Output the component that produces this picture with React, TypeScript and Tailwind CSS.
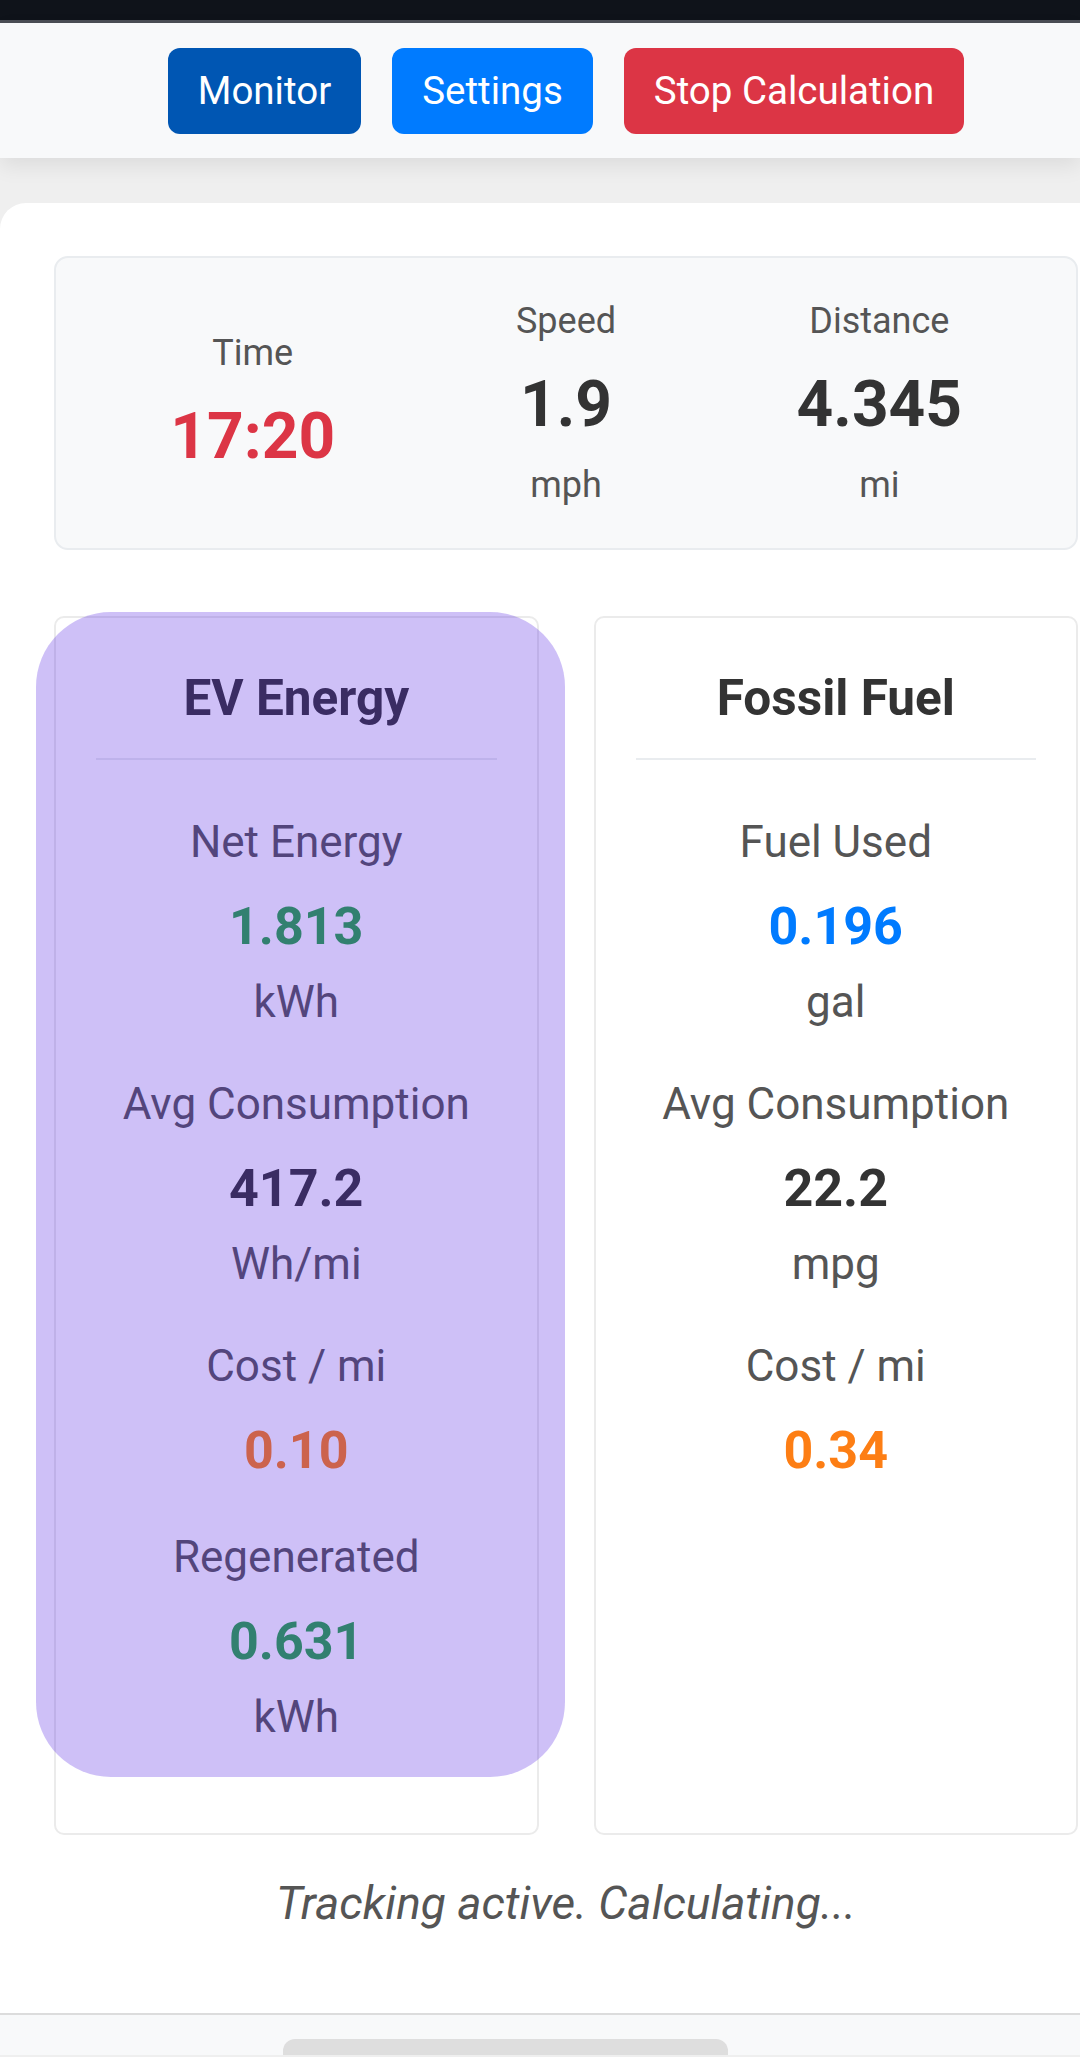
import React from 'react';

type Metric = { label: string; value: string; unit?: string; color: string };

const EV: Metric[] = [
  { label: 'Net Energy', value: '1.813', unit: 'kWh', color: 'text-[#28a745]' },
  { label: 'Avg Consumption', value: '417.2', unit: 'Wh/mi', color: 'text-[#333333]' },
  { label: 'Cost / mi', value: '0.10', color: 'text-[#fd7e14]' },
  { label: 'Regenerated', value: '0.631', unit: 'kWh', color: 'text-[#28a745]' },
];

const FOSSIL: Metric[] = [
  { label: 'Fuel Used', value: '0.196', unit: 'gal', color: 'text-[#007bff]' },
  { label: 'Avg Consumption', value: '22.2', unit: 'mpg', color: 'text-[#333333]' },
  { label: 'Cost / mi', value: '0.34', color: 'text-[#fd7e14]' },
];

function StatCol({ label, value, unit, red }: { label: string; value: string; unit?: string; red?: boolean }) {
  return (
    <div className="flex flex-col items-center">
      <span className="text-[36px] leading-[42px] text-[#555555]">{label}</span>
      <span className={`mt-[26px] text-[64px] leading-[74px] font-bold ${red ? 'text-[#dc3545]' : 'text-[#333333]'}`}>
        {value}
      </span>
      {unit && <span className="mt-[22px] text-[36px] leading-[42px] text-[#555555]">{unit}</span>}
    </div>
  );
}

function EnergyCard({ title, items, highlight }: { title: string; items: Metric[]; highlight?: boolean }) {
  return (
    <div className="relative rounded-[10px] border-2 border-[#ebebeb] bg-white p-[40px]">
      <h3 className="border-b-2 border-[#e9ecef] pb-[20px] text-center text-[49.5px] leading-[80px] font-bold text-[#333333]">
        {title}
      </h3>
      <div className="pt-[56px]">
        {items.map(m => (
          <div key={m.label} className="mb-[50px] flex flex-col items-center text-center">
            <span className="text-[44px] leading-[52px] text-[#555555]">{m.label}</span>
            <span className={`mt-[29px] text-[52px] leading-[60px] font-bold ${m.color}`}>{m.value}</span>
            {m.unit && <span className="mt-[19px] text-[44px] leading-[52px] text-[#555555]">{m.unit}</span>}
          </div>
        ))}
      </div>

      {/* selection highlight laid over the card */}
      {highlight && (
        <div className="pointer-events-none absolute -left-[20px] -top-[6px] h-[1165px] w-[529px] rounded-[75px] bg-[rgba(78,30,228,0.28)]" />
      )}
    </div>
  );
}

export default function App() {
  return (
    <div className="min-h-screen overflow-hidden bg-[#efefef] font-['Roboto','Liberation_Sans',sans-serif]">
      <div className="h-[20px] bg-[#0f131a]" />
      <div className="h-[3px] bg-[#4b4e55]" />

      {/* Top nav */}
      <header className="relative z-10 flex h-[135px] items-center justify-center gap-[31px] bg-[#f8f9fa] pl-[54px] pr-[2px] shadow-[0_8px_20px_rgba(0,0,0,0.08)]">
        <button className="h-[86px] rounded-[12px] bg-[#0056b3] px-[30px] text-[38.5px] text-white">Monitor</button>
        <button className="h-[86px] rounded-[12px] bg-[#007bff] px-[30px] text-[38.5px] text-white">Settings</button>
        <button className="h-[86px] rounded-[12px] bg-[#dc3545] px-[30px] text-[38.5px] text-white">Stop Calculation</button>
      </header>

      <main className="mt-[45px] rounded-tl-[26px] bg-white pb-[83px] pl-[54px] pr-[2px] pt-[53px]">
        {/* Live stats */}
        <div className="grid grid-cols-3 items-center rounded-[14px] border-2 border-[#e9ecef] bg-[#f8f9fa] px-[40px] py-[42px]">
          <StatCol label="Time" value="17:20" red />
          <StatCol label="Speed" value="1.9" unit="mph" />
          <StatCol label="Distance" value="4.345" unit="mi" />
        </div>

        {/* Comparison */}
        <div className="mt-[66px] grid grid-cols-2 gap-[55px]">
          <EnergyCard title="EV Energy" items={EV} highlight />
          <EnergyCard title="Fossil Fuel" items={FOSSIL} />
        </div>

        <p className="mt-[42px] text-center text-[46px] leading-[53px] italic text-[#555555]">
          Tracking active. Calculating...
        </p>
      </main>

      <footer className="h-[42px] overflow-hidden border-t-2 border-[#dcdcdc] bg-[#f8f9fa]">
        <div className="ml-[283px] mt-[24px] h-[30px] w-[445px] rounded-t-[12px] bg-[#dedede]" />
      </footer>
    </div>
  );
}
